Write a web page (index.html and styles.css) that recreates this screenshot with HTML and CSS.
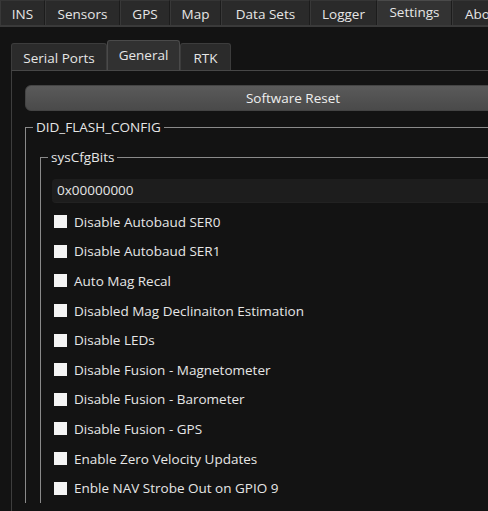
FILE: index.html
```html
<!DOCTYPE html>
<html>
<head>
<meta charset="utf-8">
<link rel="stylesheet" href="styles.css">
</head>
<body>
<div class="page">
  <div class="topbar">
    <div class="tab t-ins">INS</div>
    <div class="tab t-sensors">Sensors</div>
    <div class="tab t-gps">GPS</div>
    <div class="tab t-map">Map</div>
    <div class="tab t-data">Data Sets</div>
    <div class="tab t-logger">Logger</div>
    <div class="tab t-settings active">Settings</div>
    <div class="tab t-about">About</div>
  </div>
  <div class="content">
    <div class="subtabs">
      <div class="stab s-serial">Serial Ports</div>
      <div class="stab s-general active">General</div>
      <div class="stab s-rtk">RTK</div>
    </div>
    <div class="panel">
      <button class="reset">Software Reset</button>
      <fieldset class="group outer">
        <legend>DID_FLASH_CONFIG</legend>
        <fieldset class="group inner">
          <legend>sysCfgBits</legend>
          <div class="hexbox">0x00000000</div>
          <ul class="checks">
            <li><span class="box"></span>Disable Autobaud SER0</li>
            <li><span class="box"></span>Disable Autobaud SER1</li>
            <li><span class="box"></span>Auto Mag Recal</li>
            <li><span class="box"></span>Disabled Mag Declinaiton Estimation</li>
            <li><span class="box"></span>Disable LEDs</li>
            <li><span class="box"></span>Disable Fusion - Magnetometer</li>
            <li><span class="box"></span>Disable Fusion - Barometer</li>
            <li><span class="box"></span>Disable Fusion - GPS</li>
            <li><span class="box"></span>Enable Zero Velocity Updates</li>
            <li><span class="box"></span>Enble NAV Strobe Out on GPIO 9</li>
          </ul>
        </fieldset>
      </fieldset>
    </div>
  </div>
</div>
</body>
</html>
```
FILE: styles.css
```css
html, body {
  margin: 0;
  padding: 0;
  background: #131313;
  overflow: hidden;
}
.page {
  width: 580px;
  height: 511px;
  overflow: hidden;
  font-family: "Open Sans", "Liberation Sans", sans-serif;
  font-size: 13.5px;
  color: #e6e6e6;
  background: #131313;
}
.topbar {
  display: flex;
  height: 25px;
  background: #2a2a2a;
  border-bottom: 2px solid #3a3a3a;
}
.tab {
  box-sizing: border-box;
  height: 25px;
  line-height: 27px;
  text-align: center;
  border-right: 1px solid #1c1c1c;
  border-left: 1px solid #383838;
  border-top: 1px solid #353535;
}
.tab.active {
  background: #333;
  line-height: 22px;
  border-top: 1px solid #4a4a4a;
}
.t-ins { width: 45px; }
.t-sensors { width: 75px; }
.t-gps { width: 50px; }
.t-map { width: 51px; }
.t-data { width: 89px; }
.t-logger { width: 67px; }
.t-settings { width: 75px; }
.t-about { width: 60px; text-align: left; padding-left: 12px; }

.content {
  padding: 15px 0 0 11px;
}
.subtabs {
  display: flex;
  align-items: flex-end;
  height: 28px;
}
.stab {
  box-sizing: border-box;
  height: 27px;
  line-height: 28px;
  text-align: center;
  background: #2b2b2b;
  border: 1px solid #3c3c3c;
  border-bottom: none;
  border-radius: 3px 3px 0 0;
}
.stab.active {
  height: 30px;
  line-height: 29px;
  background: #313131;
  border-color: #4a4a4a;
}
.s-serial { width: 96px; }
.s-general { width: 73px; }
.s-rtk { width: 51px; }

.panel {
  border-top: 1px solid #474747;
  border-left: 1px solid #3e3e3e;
  padding: 14px 0 0 13px;
  height: 500px;
}
.reset {
  display: block;
  width: 536px;
  height: 26px;
  margin: 0;
  padding: 0;
  border: 1px solid #444;
  border-radius: 6px;
  background: linear-gradient(#5a5a5a, #4a4a4a);
  color: #eeeeee;
  font: inherit;
  font-size: 13.5px;
  line-height: 24px;
}
.group {
  margin: 0;
  padding: 0;
  border: none;
  border-top: 1px solid #8a8a8a;
  border-left: 1px solid #8a8a8a;
  min-width: 0;
}
.group legend {
  padding: 0 3px 0 3px;
  line-height: 18px;
}
.outer {
  margin-top: 7px;
  padding: 12px 0 0 14px;
}
.outer > legend {
  margin-left: -7px;
}
.inner {
  padding: 13px 0 0 11px;
}
.inner > legend {
  margin-left: -4px;
}
.hexbox {
  height: 23px;
  line-height: 23px;
  padding-left: 5px;
  background: #1d1d1d;
  border-radius: 4px;
  border-bottom: 1px solid #222;
}
.checks {
  list-style: none;
  margin: 4px 0 0 0;
  padding: 0;
}
.checks li {
  display: flex;
  align-items: center;
  height: 29.6px;
  padding-left: 2px;
}
.box {
  width: 13px;
  height: 13px;
  background: #f4f4f4;
  margin-right: 7px;
}
```
